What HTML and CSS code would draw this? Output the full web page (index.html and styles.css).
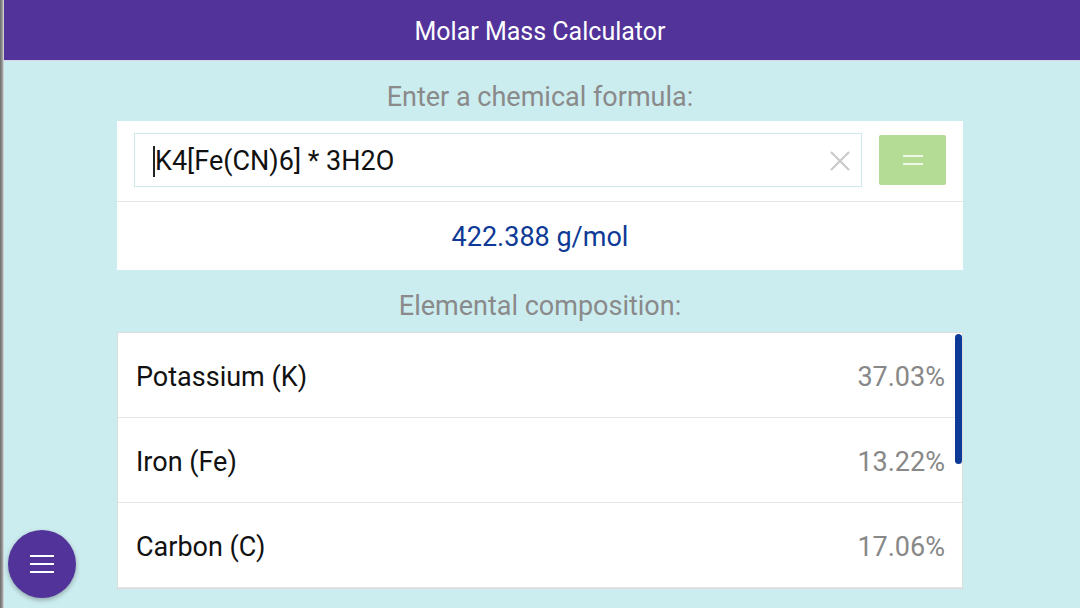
FILE: index.html
```html
<!DOCTYPE html>
<html>
<head>
<meta charset="utf-8">
<link rel="stylesheet" href="styles.css">
</head>
<body>
<div class="edge"></div>
<header class="appbar">Molar Mass Calculator</header>
<main class="content">
  <div class="label">Enter a chemical formula:</div>
  <section class="card">
    <div class="input-row">
      <div class="input">
        <span class="caret"></span><span class="formula">K4[Fe(CN)6] * 3H2O</span>
        <svg class="clear" width="22" height="22" viewBox="0 0 22 22"><path d="M2 2L20 20M20 2L2 20" stroke="#c8c8c8" stroke-width="2" fill="none"/></svg>
      </div>
      <button class="calc">
        <svg width="24" height="12" viewBox="0 0 24 12"><path d="M2 2H22M2 10H22" stroke="#eef7e6" stroke-width="2" fill="none"/></svg>
      </button>
    </div>
    <div class="result">422.388 g/mol</div>
  </section>
  <div class="label label2">Elemental composition:</div>
  <section class="list">
    <div class="row"><span class="name">Potassium (K)</span><span class="pct">37.03%</span></div>
    <div class="row"><span class="name">Iron (Fe)</span><span class="pct">13.22%</span></div>
    <div class="row"><span class="name">Carbon (C)</span><span class="pct">17.06%</span></div>
    <div class="scrollbar"></div>
  </section>
</main>
<button class="fab">
  <svg width="26" height="20" viewBox="0 0 26 20"><path d="M1 2H25M1 10H25M1 18H25" stroke="#fff" stroke-width="2" fill="none"/></svg>
</button>
</body>
</html>
```
FILE: styles.css
```css
* { box-sizing: border-box; }
html, body { margin: 0; padding: 0; }
body {
  width: 1080px;
  height: 608px;
  overflow: hidden;
  background: #ccedf0;
  font-family: Roboto, "Noto Sans", sans-serif;
  position: relative;
}
.edge {
  position: absolute;
  left: 0; top: 0;
  width: 4px; height: 608px;
  background: linear-gradient(to right, #6a6a6a, #9a9a9a 60%, #e0e6e8);
  z-index: 5;
}
.appbar {
  height: 61px;
  padding-top: 3px;
  background: #51339a;
  color: #fff;
  font-size: 25px;
  display: flex;
  align-items: center;
  justify-content: center;
  border-bottom: 1px solid #d8d8ee;
}
.content {
  width: 846px;
  margin: 0 auto;
  display: flex;
  flex-direction: column;
}
.label {
  height: 30px;
  line-height: 30px;
  text-align: center;
  color: #8a8a8a;
  font-size: 27px;
  margin-top: 21px;
  margin-bottom: 9px;
}
.label2 { margin-top: 21px; margin-bottom: 11px; }
.card {
  background: #fff;
  display: flex;
  flex-direction: column;
}
.input-row {
  display: flex;
  gap: 17px;
  padding: 12px 17px 0 17px;
  height: 81px;
  border-bottom: 1px solid #e6e6e6;
  align-items: flex-start;
}
.input {
  flex: 1;
  height: 54px;
  border: 1px solid #cfeaee;
  display: flex;
  align-items: center;
  padding-left: 18px;
  padding-right: 10px;
  padding-top: 2px;
  position: relative;
}
.caret {
  width: 2px;
  height: 31px;
  background: #222;
}
.formula {
  font-size: 27px;
  color: #111;
  flex: 1;
}
.calc {
  width: 67px;
  height: 50px;
  margin-top: 2px;
  background: #b5dc94;
  border: none;
  border-radius: 2px;
  display: flex;
  align-items: center;
  justify-content: center;
  padding: 0;
}
.result {
  height: 68px;
  padding-top: 2px;
  display: flex;
  align-items: center;
  justify-content: center;
  font-size: 27px;
  color: #0d3a96;
}
.list {
  background: #fff;
  border: 1px solid #dcdcdc;
  position: relative;
  height: 257px;
  overflow: hidden;
}
.row {
  height: 85px;
  display: flex;
  align-items: center;
  justify-content: space-between;
  padding: 3px 17px 0 18px;
  border-bottom: 1px solid #e6e6e6;
}
.row:last-of-type { border-bottom: none; }
.name { font-size: 27px; color: #111; }
.pct { font-size: 27px; color: #888; }
.scrollbar {
  position: absolute;
  right: 0;
  top: 1px;
  width: 7px;
  height: 130px;
  border-radius: 4px;
  background: #0d3a96;
}
.fab {
  position: absolute;
  left: 8px;
  top: 530px;
  width: 68px;
  height: 68px;
  border-radius: 50%;
  background: #51339a;
  border: none;
  padding: 0;
  display: flex;
  align-items: center;
  justify-content: center;
  box-shadow: 0 2px 5px rgba(0,0,0,0.3);
}
```
